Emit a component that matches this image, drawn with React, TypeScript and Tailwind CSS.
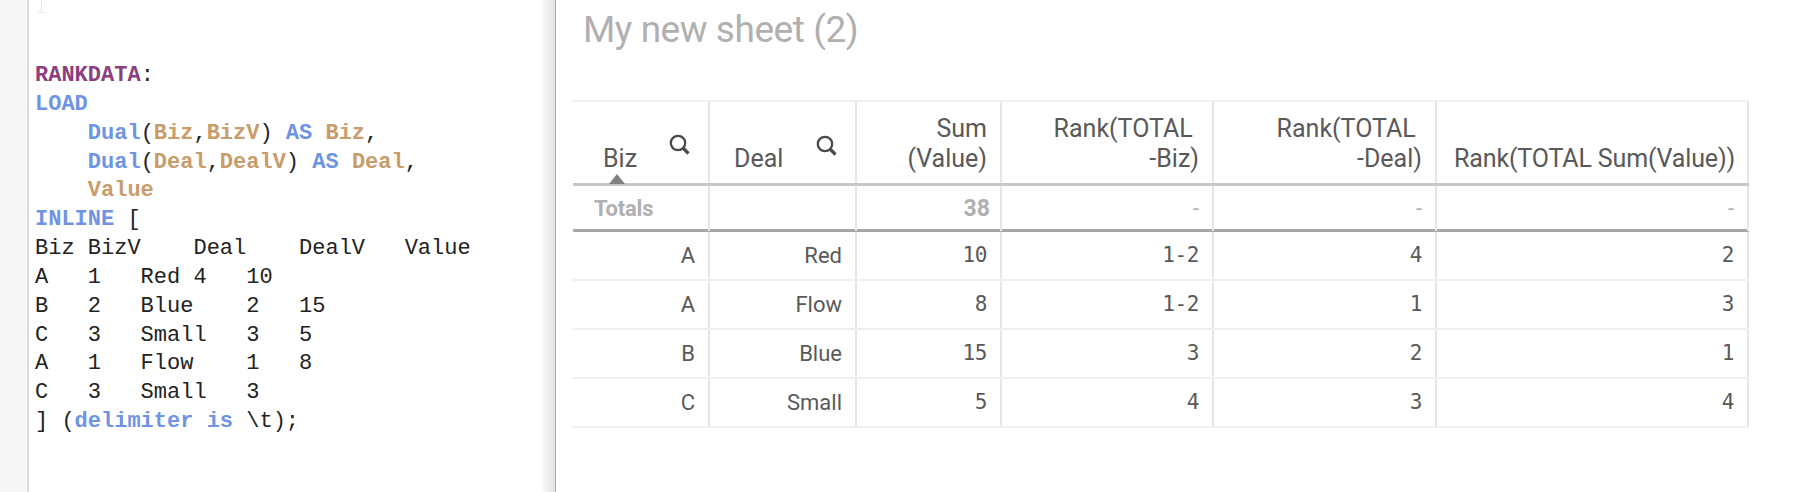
const K = "text-[#6f94e3] font-bold";
const F = "text-[#c99c6b] font-bold";

function Code() {
  return (
    <pre className="font-['Liberation_Mono',monospace] text-[22px] leading-[28.85px] text-[#222] pl-[6px] pt-[62px]">
      <span className="text-[#8b3f7f] font-bold">RANKDATA</span>:{"\n"}
      <span className={K}>LOAD</span>{"\n"}
      {"    "}<span className={K}>Dual</span>(<span className={F}>Biz</span>,<span className={F}>BizV</span>) <span className={K}>AS</span> <span className={F}>Biz</span>,{"\n"}
      {"    "}<span className={K}>Dual</span>(<span className={F}>Deal</span>,<span className={F}>DealV</span>) <span className={K}>AS</span> <span className={F}>Deal</span>,{"\n"}
      {"    "}<span className={F}>Value</span>{"\n"}
      <span className={K}>INLINE</span> [{"\n"}
      {"Biz BizV    Deal    DealV   Value\n"}
      {"A   1   Red 4   10\n"}
      {"B   2   Blue    2   15\n"}
      {"C   3   Small   3   5\n"}
      {"A   1   Flow    1   8\n"}
      {"C   3   Small   3\n"}
      ] (<span className={K}>delimiter</span> <span className={K}>is</span> \t);
    </pre>
  );
}

function Search({ cls }: { cls: string }) {
  return (
    <svg width="22" height="22" viewBox="0 0 22 22" fill="none" stroke="#4a4a4a" strokeWidth="2.3" className={`absolute ${cls}`}>
      <circle cx="9" cy="9" r="7.2" />
      <path d="M14 14 L19.5 19.5" strokeWidth="3.2" />
    </svg>
  );
}

const cols = "grid grid-cols-[137px_147px_145px_212px_223px_312px]";
const v = "border-r-2 border-[#e6e6e6]";
const num = "font-['DejaVu_Sans_Mono',monospace] text-[21px] tracking-[-0.4px]";

const rows = [
  ["A", "Red", "10", "1-2", "4", "2"],
  ["A", "Flow", "8", "1-2", "1", "3"],
  ["B", "Blue", "15", "3", "2", "1"],
  ["C", "Small", "5", "4", "3", "4"],
];

function HeadCell({ children, search, left, arrow, pr }: { children: React.ReactNode; search?: string; left?: string; arrow?: boolean; pr?: string }) {
  return (
    <div className={`relative flex h-full items-end pb-[9px] leading-[30px] text-[25px] text-[#595959] ${left ? left : `justify-end text-right ${pr ?? "pr-[13px]"}`} ${v}`}>
      <span className="whitespace-pre">{children}</span>
      {search && <Search cls={search} />}
      {arrow && <span className="absolute left-[36px] bottom-[-1px] w-0 h-0 border-l-[8px] border-r-[8px] border-b-[10px] border-l-transparent border-r-transparent border-b-[#808080]" />}
    </div>
  );
}

export default function App() {
  return (
    <div className="flex h-[492px] w-[1806px] overflow-hidden bg-white font-['Roboto',sans-serif]">
      <div className="w-[29px] shrink-0 bg-[#f7f7f7] border-r-2 border-[#dcdcdc]" />
      <div className="relative w-[527px] shrink-0 bg-white border-r border-[#a8a8a8]">
        <div className="absolute left-[9px] top-0 w-[7px] h-[13px] border-b border-[#e8e8e8]">
          <div className="mx-auto h-full w-px bg-[#e8e8e8]" />
        </div>
        <div className="absolute right-0 top-0 h-full w-[15px] bg-gradient-to-r from-white to-[#e2e2e2]" />
        <Code />
      </div>
      <div className="flex-1 pl-[17px]">
        <h1 className="pl-[10px] pt-[7px] h-[100px] text-[37px] leading-[45px] font-normal text-[#b0b0b0] tracking-[-0.45px]">My new sheet (2)</h1>
        <div className="w-[1176px] border-t-2 border-[#f0f0f0]">
          <div className={`${cols} h-[84px] border-b-[3px] border-[#c8c8c8]`}>
            <HeadCell search="right-[17px] top-[32px]" arrow left="pl-[30px]">Biz</HeadCell>
            <HeadCell search="right-[17px] top-[33px]" left="pl-[24px]">Deal</HeadCell>
            <HeadCell>{"Sum\n(Value)"}</HeadCell>
            <HeadCell>{"Rank(TOTAL \n-Biz)"}</HeadCell>
            <HeadCell>{"Rank(TOTAL \n-Deal)"}</HeadCell>
            <HeadCell pr="pr-[12px]"><span className="tracking-[-0.15px]">Rank(TOTAL Sum(Value))</span></HeadCell>
          </div>
          <div className={`${cols} h-[46px] border-b-[3px] border-[#a6a6a6] text-[22px] leading-[45px] font-bold text-[#b0b0b0]`}>
            <div className={`pl-[21px] tracking-[-0.2px] ${v}`}>Totals</div>
            <div className={v} />
            <div className={`text-right pr-[10px] text-[23px] ${v}`}>38</div>
            <div className={`text-right pr-[13px] font-normal ${v}`}>-</div>
            <div className={`text-right pr-[13px] font-normal ${v}`}>-</div>
            <div className={`text-right pr-[13px] font-normal ${v}`}>-</div>
          </div>
          {rows.map((r, i) => (
            <div key={i} className={`${cols} h-[49px] border-b-2 border-[#f0f0f0] text-[22px] leading-[47px] text-[#595959]`}>
              {r.map((c, j) => (
                <div key={j} className={`text-right pr-[13px] ${j >= 2 ? num : ""} ${v}`}>{c}</div>
              ))}
            </div>
          ))}
        </div>
      </div>
    </div>
  );
}
